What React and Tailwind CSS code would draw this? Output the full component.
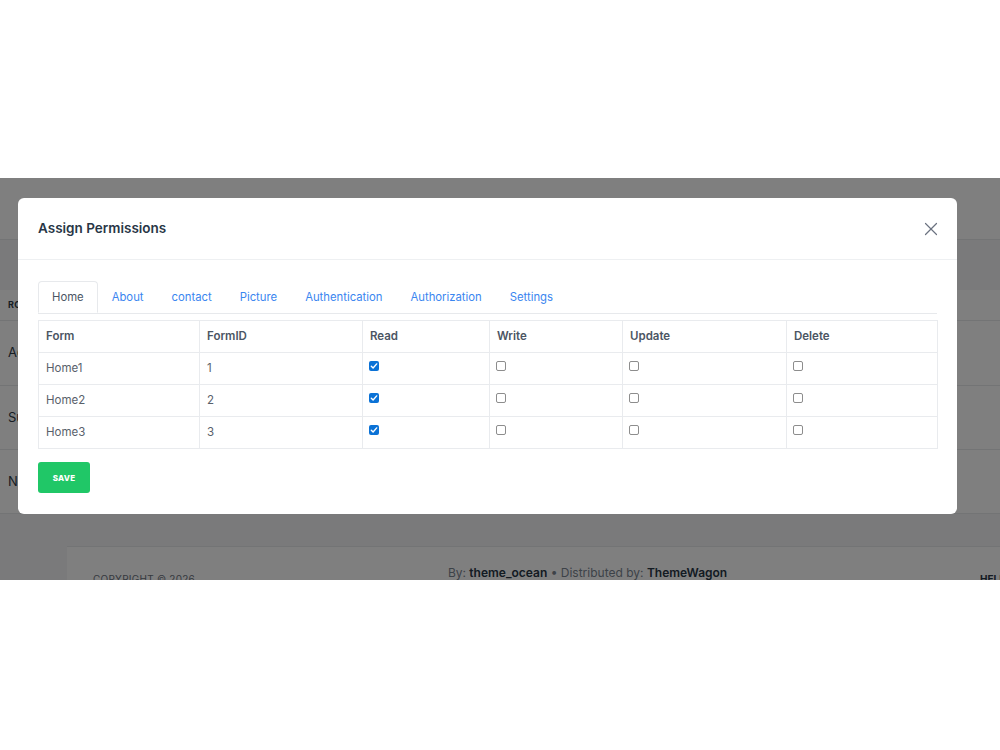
import { X } from 'lucide-react'

const tabs = ['Home', 'About', 'contact', 'Picture', 'Authentication', 'Authorization', 'Settings']
const columns = ['Form', 'FormID', 'Read', 'Write', 'Update', 'Delete']
const colWidths = ['w-[161px]', 'w-[163px]', 'w-[127px]', 'w-[133px]', 'w-[164px]', 'w-[151px]']

const rows = [
  { form: 'Home1', id: 1, perms: [true, false, false, false] },
  { form: 'Home2', id: 2, perms: [true, false, false, false] },
  { form: 'Home3', id: 3, perms: [true, false, false, false] },
]

function Check({ checked }) {
  if (checked) {
    return (
      <span className="w-[10px] h-[10px] rounded-[2px] bg-[#0b72d6] flex items-center justify-center">
        <svg width="8" height="8" viewBox="0 0 8 8" fill="none">
          <path d="M1.3 4.2 L3.1 6 L6.7 1.9" stroke="white" strokeWidth="1.4" strokeLinecap="round" strokeLinejoin="round" />
        </svg>
      </span>
    )
  }
  return <span className="block w-[10px] h-[10px] rounded-[2px] border border-[#8d8d8d] bg-white" />
}

function BackgroundPage() {
  return (
    <div className="h-full flex flex-col bg-[#f4f5f6] text-[#2f3b48]">
      {/* top bar */}
      <div className="shrink-0 h-[62px] bg-white border-b border-[#e6e8eb]" />
      <div className="shrink-0 h-[50px]" />
      {/* roles table */}
      <div className="shrink-0 bg-white">
        <div className="h-[31px] flex items-center px-2 border-b border-[#e6e8eb] text-[9px] font-bold tracking-wide">ROLE</div>
        <div className="h-[65px] flex items-center px-2 border-b border-[#e6e8eb] text-[13px]">Admin</div>
        <div className="h-[64px] flex items-center px-2 border-b border-[#e6e8eb] text-[13px]">Super</div>
        <div className="h-[64px] flex items-center px-2 border-b border-[#e6e8eb] text-[13px]">None</div>
      </div>
      <div className="shrink-0 h-[32px]" />
      {/* footer */}
      <div className="ml-[67px] flex-1 min-h-0 bg-white border-t border-[#e6e8eb] flex items-start justify-between pl-[26px]">
        <span className="mt-[25px] text-[10px] uppercase tracking-wide text-[#6b7280]">Copyright © 2026</span>
        <span className="mt-[17px] text-[12px] text-[#7b8591]">
          By: <b className="text-[#283646] font-semibold">theme_ocean</b> • Distributed by: <b className="text-[#283646] font-semibold">ThemeWagon</b>
        </span>
        <span className="mt-[25px] text-[10px] font-bold text-[#283646] w-[20px] overflow-hidden">HELP</span>
      </div>
    </div>
  )
}

export default function App() {
  return (
    <div className="w-[1000px] h-[750px] bg-white flex flex-col" style={{ fontFamily: 'Inter, "Noto Sans", sans-serif' }}>
      <div className="h-[178px] shrink-0" />
      <div className="relative h-[402px] shrink-0 overflow-hidden">
        <BackgroundPage />
        <div className="absolute inset-0 bg-black/50" />

        {/* Modal */}
        <div className="absolute left-[18px] top-[20px] w-[939px] bg-white rounded-[6px]">
          <div className="h-[62px] flex items-center justify-between pl-5 pr-[15px] border-b border-[#eef0f2]">
            <h2 className="text-[13.5px] font-semibold text-[#283646]">Assign Permissions</h2>
            <X size={22} strokeWidth={1.3} className="text-[#6b7280]" />
          </div>

          <div className="px-5 pt-[21px] pb-[21px]">
            {/* Tabs */}
            <div className="flex border-b border-[#e7e9ec]">
              {tabs.map((t, i) => (
                <div
                  key={t}
                  className={
                    i === 0
                      ? 'h-[32px] px-[13px] flex items-center text-[11.3px] text-[#4b5563] border border-[#e7e9ec] border-b-white rounded-t-[4px] -mb-px bg-white'
                      : 'h-[32px] px-[13px] flex items-center text-[11.3px] text-[#3a86f0] border border-transparent'
                  }
                >
                  {t}
                </div>
              ))}
            </div>

            {/* Permissions table */}
            <table className="mt-[6px] w-[899px] border-collapse text-[11.5px] table-fixed">
              <thead>
                <tr>
                  {columns.map((c, i) => (
                    <th key={c} className={`${colWidths[i]} h-[32px] border border-[#e9ebee] px-[7px] text-left font-semibold text-[#4b5563]`}>
                      {c}
                    </th>
                  ))}
                </tr>
              </thead>
              <tbody>
                {rows.map((r) => (
                  <tr key={r.form}>
                    <td className="h-[32px] border border-[#e9ebee] px-[7px] text-[#59616b]">{r.form}</td>
                    <td className="h-[32px] border border-[#e9ebee] px-[7px] text-[#59616b]">{r.id}</td>
                    {r.perms.map((p, i) => (
                      <td key={i} className="h-[32px] border border-[#e9ebee] pl-[6px] pr-[7px] align-top pt-[8px]">
                        <Check checked={p} />
                      </td>
                    ))}
                  </tr>
                ))}
              </tbody>
            </table>

            <button className="mt-[13px] w-[52px] h-[31px] rounded-[3px] bg-[#20c767] text-white text-[8px] font-extrabold tracking-wide flex items-center justify-center">
              SAVE
            </button>
          </div>
        </div>
      </div>
      <div className="flex-1" />
    </div>
  )
}
